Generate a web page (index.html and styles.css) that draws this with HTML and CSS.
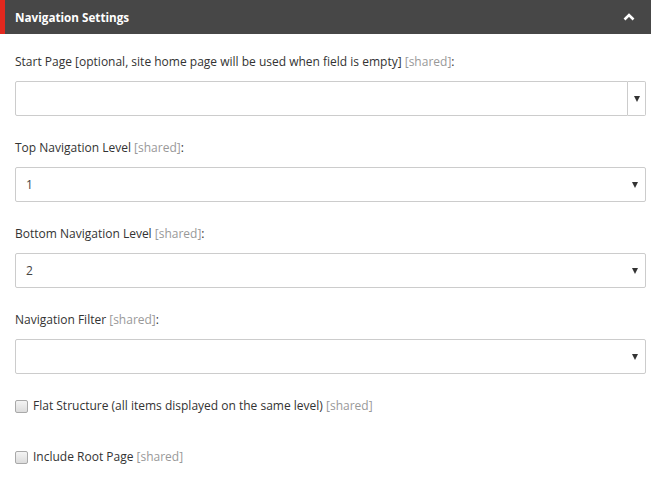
FILE: index.html
```html
<!DOCTYPE html>
<html>
<head>
<meta charset="utf-8">
<link rel="stylesheet" href="styles.css">
</head>
<body>
<div class="panel">
  <div class="panel-header">
    <span class="panel-title">Navigation Settings</span>
    <svg class="chevron" width="12" height="8" viewBox="0 0 12 8"><path d="M1.5 6.5 L6 2 L10.5 6.5" fill="none" stroke="#fff" stroke-width="2.6"/></svg>
  </div>
  <div class="panel-body">
    <div class="field">
      <div class="label">Start Page [optional, site home page will be used when field is empty] <span class="shared">[shared]</span>:</div>
      <div class="combo">
        <div class="combo-input"></div>
        <div class="combo-btn"><span class="tri"></span></div>
      </div>
    </div>
    <div class="field">
      <div class="label">Top Navigation Level <span class="shared">[shared]</span>:</div>
      <div class="select"><span class="value">1</span><span class="tri"></span></div>
    </div>
    <div class="field">
      <div class="label">Bottom Navigation Level <span class="shared">[shared]</span>:</div>
      <div class="select"><span class="value">2</span><span class="tri"></span></div>
    </div>
    <div class="field">
      <div class="label">Navigation Filter <span class="shared">[shared]</span>:</div>
      <div class="select"><span class="value"></span><span class="tri"></span></div>
    </div>
    <div class="check">
      <span class="box"></span>
      <span>Flat Structure (all items displayed on the same level) <span class="shared">[shared]</span></span>
    </div>
    <div class="check">
      <span class="box"></span>
      <span>Include Root Page <span class="shared">[shared]</span></span>
    </div>
  </div>
</div>
</body>
</html>
```

FILE: styles.css
```css
html, body {
  margin: 0;
  padding: 0;
  background: #fff;
}
body {
  font-family: "Open Sans", "Noto Sans", sans-serif;
  font-size: 12px;
  color: #333;
  width: 651px;
  height: 483px;
  overflow: hidden;
}
.panel-header {
  height: 34px;
  background: #474747;
  border-left: 5px solid #e2281e;
  box-sizing: border-box;
  display: flex;
  align-items: center;
  justify-content: space-between;
  padding: 0 16px 0 10px;
}
.panel-title {
  color: #fff;
  font-weight: 700;
  font-size: 11.7px;
}
.chevron {
  display: block;
}
.panel-body {
  padding: 19px 5px 0 15px;
}
.field {
  margin-bottom: 23px;
}
.label {
  line-height: 18px;
  margin-bottom: 10px;
  white-space: nowrap;
}
.shared {
  color: #999;
}
.combo {
  display: flex;
  height: 35px;
}
.combo-input {
  flex: 1;
  border: 1px solid #ccc;
  border-radius: 2px 0 0 2px;
}
.combo-btn {
  width: 17px;
  border: 1px solid #ccc;
  border-left: none;
  border-radius: 0 2px 2px 0;
  display: flex;
  align-items: center;
  justify-content: center;
}
.select {
  height: 35px;
  box-sizing: border-box;
  border: 1px solid #ccc;
  border-radius: 2px;
  display: flex;
  align-items: center;
  justify-content: space-between;
  padding: 0 7px 0 10px;
}
.value {
  color: #444;
}
.tri {
  width: 0;
  height: 0;
  border-left: 3.5px solid transparent;
  border-right: 3.5px solid transparent;
  border-top: 6px solid #333;
  margin-top: 1px;
}
.check {
  display: flex;
  align-items: center;
  gap: 5px;
  line-height: 18px;
  margin-bottom: 33px;
}
.box {
  width: 11px;
  height: 11px;
  border: 1px solid #a9a9a9;
  border-radius: 2px;
  background: linear-gradient(#f4f4f4, #dcdcdc);
  flex: none;
}
```
